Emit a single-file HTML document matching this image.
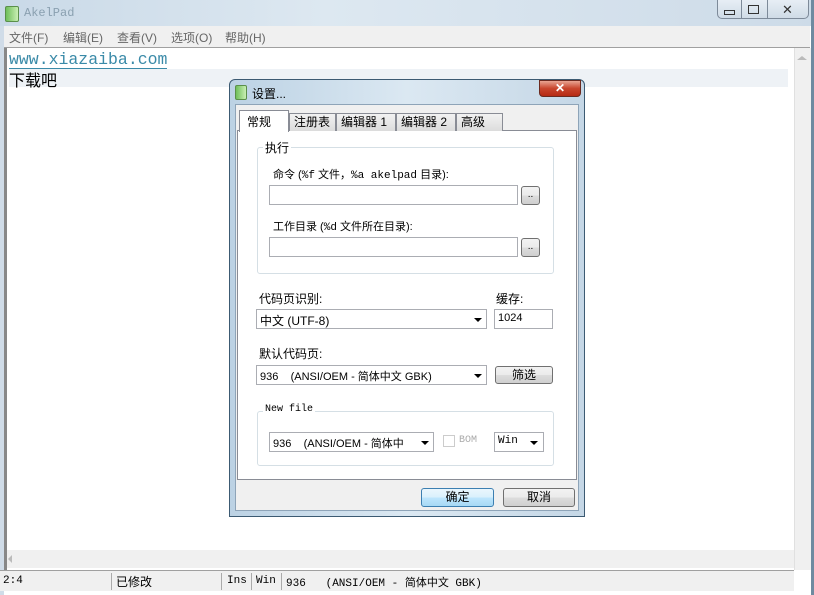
<!DOCTYPE html>
<html><head><meta charset="utf-8"><style>
*{margin:0;padding:0;box-sizing:border-box}
body{width:814px;height:595px;overflow:hidden;background:#fff;font-family:"Liberation Sans","Noto Sans CJK SC",sans-serif;font-size:12px;color:#000;position:relative}
.a{position:absolute}
.mono{font-family:"Liberation Mono","Noto Sans CJK SC",monospace}
.inp{position:absolute;background:#fff;border:1px solid #abadb3}
.btn{position:absolute;border:1px solid #707070;border-radius:3px;background:linear-gradient(#f2f2f2,#ebebeb 50%,#dddddd 50%,#cfcfcf);text-align:center;font-size:12px;line-height:18px}
.arrow{position:absolute;width:0;height:0;border-left:4px solid transparent;border-right:4px solid transparent;border-top:4px solid #000}
.tab{position:absolute;top:113px;height:18px;border:1px solid #898c95;border-bottom:none;background:linear-gradient(#f2f2f2,#dcdcdc);font-size:12px;line-height:16px;padding-left:4px}
.grp{position:absolute;border:1px solid #d5dfe5;border-radius:3px}
.m{position:absolute;top:29px;color:#666;font-size:12px}
</style></head><body>
<div class="a" style="left:0;top:0;width:814px;height:26px;background:linear-gradient(90deg,#c9d9e7,#dde8f1 40%,#cddbe8);"></div>
<div class="a" style="left:5px;top:6px;width:14px;height:16px;background:linear-gradient(90deg,#6fbf5a,#c9efb4);border:1px solid #5a8f4a;border-radius:2px"></div>
<div class="a mono" style="left:24px;top:6px;color:#8aa0b0;font-size:12px">AkelPad</div>
<div class="a" style="left:717px;top:0;width:92px;height:19px;border:1px solid #7d8a99;border-top:none;border-radius:0 0 5px 5px;background:linear-gradient(#e7eef5,#cfdbe6)"></div>
<div class="a" style="left:741px;top:0;width:1px;height:19px;background:#7d8a99"></div>
<div class="a" style="left:767px;top:0;width:1px;height:19px;background:#7d8a99"></div>
<div class="a" style="left:724px;top:10px;width:11px;height:5px;border:1px solid #333"></div>
<div class="a" style="left:748px;top:5px;width:11px;height:9px;border:1px solid #333"></div>
<div class="a" style="left:782px;top:2px;font-size:13px;color:#333">✕</div>
<div class="a" style="left:0;top:26px;width:810px;height:22px;background:#f0f0f0;border-bottom:1px solid #a0a0a0"></div>
<div class="m" style="left:9px">文件(F)</div>
<div class="m" style="left:63px">编辑(E)</div>
<div class="m" style="left:117px">查看(V)</div>
<div class="m" style="left:171px">选项(O)</div>
<div class="m" style="left:225px">帮助(H)</div>
<div class="a" style="left:0;top:26px;width:4px;height:569px;background:#d0dce8"></div>
<div class="a" style="left:4px;top:48px;width:3px;height:522px;background:#888"></div>
<div class="a" style="left:9px;top:69px;width:779px;height:18px;background:#eef2f6"></div>
<div class="a mono" style="left:9px;top:51px;color:#3a8aa8;font-size:16.5px;border-bottom:1px solid #3a8aa8;line-height:17px">www.xiazaiba.com</div>
<div class="a" style="left:9px;top:67px;font-size:16px">下载吧</div>
<div class="a" style="left:794px;top:48px;width:17px;height:522px;background:#f0f0f0;border-left:1px solid #e0e0e0"></div>
<div class="a" style="left:797px;top:56px;border-left:5px solid transparent;border-right:5px solid transparent;border-bottom:4px solid #bbb"></div>
<div class="a" style="left:7px;top:550px;width:787px;height:18px;background:#f0f0f0"></div>
<div class="a" style="left:8px;top:555px;border-top:4px solid transparent;border-bottom:4px solid transparent;border-right:4px solid #bbb"></div>
<div class="a" style="left:811px;top:0;width:3px;height:595px;background:#6f8aa0"></div>
<div class="a" style="left:0;top:570px;width:794px;height:21px;background:#f0f0f0;border-top:1px solid #a0a0a0"></div>
<div class="a mono" style="left:3px;top:575px;font-size:11px">2:4</div>
<div class="a" style="left:111px;top:573px;width:1px;height:17px;background:#aaa"></div>
<div class="a" style="left:116px;top:573px;font-size:12px">已修改</div>
<div class="a" style="left:221px;top:573px;width:1px;height:17px;background:#aaa"></div>
<div class="a mono" style="left:227px;top:575px;font-size:11px">Ins</div>
<div class="a" style="left:251px;top:573px;width:1px;height:17px;background:#aaa"></div>
<div class="a mono" style="left:256px;top:575px;font-size:11px">Win</div>
<div class="a" style="left:281px;top:573px;width:1px;height:17px;background:#aaa"></div>
<div class="a mono" style="left:286px;top:574px;font-size:11px;white-space:pre">936   (ANSI/OEM - 简体中文 GBK)</div>
<div class="a" style="left:229px;top:79px;width:356px;height:438px;border:1px solid #3c5a72;border-radius:6px 6px 0 0;background:linear-gradient(90deg,#bcd2e4,#dbe8f2 50%,#c5d7e6)"></div>
<div class="a" style="left:235px;top:85px;width:12px;height:15px;background:linear-gradient(90deg,#6fbf5a,#c9efb4);border:1px solid #5a8f4a;border-radius:2px"></div>
<div class="a" style="left:252px;top:85px;font-size:12px">设置...</div>
<div class="a" style="left:539px;top:80px;width:42px;height:17px;border:1px solid #6b2a20;border-radius:0 0 4px 4px;background:linear-gradient(#e9a593,#c8452d 50%,#b52a14);color:#fff;text-align:center;font-size:12px;font-weight:bold;line-height:15px">✕</div>
<div class="a" style="left:235px;top:104px;width:344px;height:407px;background:#f0f0f0;border:1px solid #8ea4b8"></div>
<div class="a" style="left:237px;top:130px;width:340px;height:350px;background:#fff;border:1px solid #898c95"></div>
<div class="tab" style="left:289px;width:47px">注册表</div>
<div class="tab" style="left:336px;width:60px">编辑器 1</div>
<div class="tab" style="left:396px;width:60px">编辑器 2</div>
<div class="tab" style="left:456px;width:47px">高级</div>
<div class="a" style="left:239px;top:110px;width:50px;height:22px;background:#fff;border:1px solid #898c95;border-bottom:none;font-size:12px;padding:2px 0 0 7px">常规</div>
<div class="grp" style="left:257px;top:147px;width:297px;height:127px"></div>
<div class="a" style="left:263px;top:139px;background:#fff;padding:0 2px">执行</div>
<div class="a" style="left:273px;top:166px;font-size:11px">命令 (<span class="mono">%f</span> 文件，<span class="mono">%a akelpad</span> 目录):</div>
<div class="inp" style="left:269px;top:185px;width:249px;height:20px"></div>
<div class="btn" style="left:521px;top:186px;width:19px;height:19px;line-height:16px;font-size:10px">..</div>
<div class="a" style="left:273px;top:218px;font-size:11px">工作目录 (<span class="mono">%d</span> 文件所在目录):</div>
<div class="inp" style="left:269px;top:237px;width:249px;height:20px"></div>
<div class="btn" style="left:521px;top:238px;width:19px;height:19px;line-height:16px;font-size:10px">..</div>
<div class="a" style="left:259px;top:290px">代码页识别:</div>
<div class="a" style="left:496px;top:290px">缓存:</div>
<div class="inp" style="left:256px;top:309px;width:231px;height:20px;padding:2px 3px">中文 (UTF-8)</div>
<div class="arrow" style="left:474px;top:318px"></div>
<div class="inp" style="left:494px;top:309px;width:59px;height:20px;padding:2px 3px;font-size:11px">1024</div>
<div class="a" style="left:259px;top:345px">默认代码页:</div>
<div class="inp" style="left:256px;top:365px;width:231px;height:20px;padding:2px 3px;white-space:pre;font-size:11px">936    (ANSI/OEM - 简体中文 GBK)</div>
<div class="arrow" style="left:474px;top:374px"></div>
<div class="btn" style="left:495px;top:366px;width:58px;height:18px;line-height:16px">筛选</div>
<div class="grp" style="left:257px;top:411px;width:297px;height:55px"></div>
<div class="a mono" style="left:263px;top:404px;background:#fff;padding:0 2px;font-size:10px">New file</div>
<div class="inp" style="left:269px;top:432px;width:165px;height:20px;padding:2px 3px;white-space:pre;font-size:11px">936    (ANSI/OEM - 简体中</div>
<div class="arrow" style="left:421px;top:441px"></div>
<div class="a" style="left:443px;top:435px;width:12px;height:12px;border:1px solid #ccc"></div>
<div class="a mono" style="left:459px;top:435px;color:#aaa;font-size:10px">BOM</div>
<div class="inp mono" style="left:494px;top:432px;width:50px;height:20px;padding:2px 3px;font-size:11px">Win</div>
<div class="arrow" style="left:530px;top:441px"></div>
<div class="btn" style="left:421px;top:488px;width:73px;height:19px;border-color:#3c7fb1;line-height:17px;background:linear-gradient(#eaf6fd,#d9f0fc 50%,#bee6fd 50%,#a7d9f5)">确定</div>
<div class="btn" style="left:503px;top:488px;width:72px;height:19px;line-height:17px">取消</div>
</body></html>
